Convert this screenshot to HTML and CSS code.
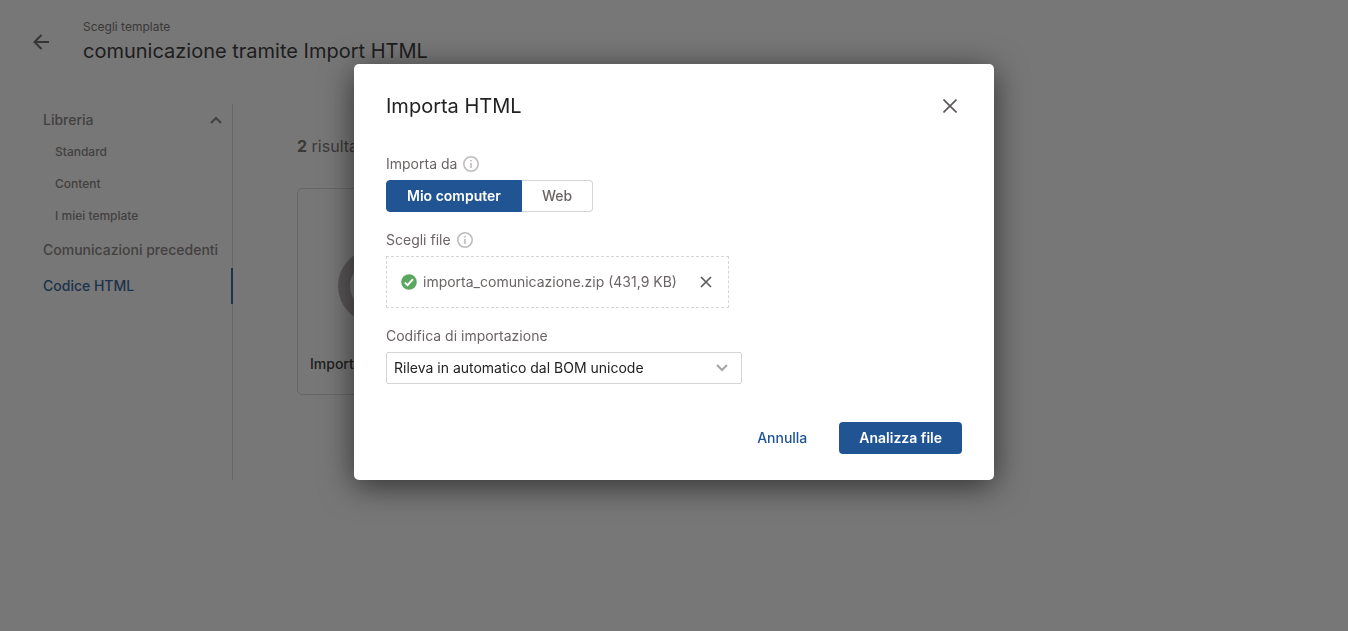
FILE: index.html
```html
<!DOCTYPE html>
<html lang="it">
<head>
    <meta charset="UTF-8">
    <meta name="viewport" content="width=device-width, initial-scale=1.0">
    <title>Importa HTML</title>
    <link rel="stylesheet" href="styles.css">
</head>
<body>
    <header class="page-header">
        <button class="icon-btn" aria-label="Indietro">
            <svg width="16" height="16" viewBox="0 0 16 16"><path d="M16 8H1.5M8.5 1L1.5 8L8.5 15"/></svg>
        </button>
        <div>
            <p class="page-step">Scegli template</p>
            <h1>comunicazione tramite Import HTML</h1>
        </div>
    </header>

    <div class="page-body">
        <nav class="sidebar">
            <a class="nav-item nav-group" href="#">Libreria
                <svg width="12" height="8" viewBox="0 0 12 8"><path d="M1 7l5-5 5 5"/></svg>
            </a>
            <a class="nav-item nav-sub" href="#">Standard</a>
            <a class="nav-item nav-sub" href="#">Content</a>
            <a class="nav-item nav-sub" href="#">I miei template</a>
            <a class="nav-item" href="#">Comunicazioni precedenti</a>
            <a class="nav-item active" href="#">Codice HTML</a>
        </nav>
        <main class="results">
            <p class="results-count"><b>2</b> risultati</p>
            <div class="card">
                <div class="card-icon"></div>
                <p>Importa HTML</p>
            </div>
        </main>
    </div>

    <div class="overlay">
        <div class="modal" role="dialog" aria-labelledby="modal-title">
            <div class="modal-header">
                <h2 id="modal-title">Importa HTML</h2>
                <button class="icon-btn" aria-label="Chiudi">
                    <svg width="14" height="14" viewBox="0 0 14 14"><path d="M0.5 0.5l13 13M13.5 0.5l-13 13"/></svg>
                </button>
            </div>

            <div class="field">
                <div class="label" id="source-label">Importa da
                    <svg class="info" width="16" height="16" viewBox="0 0 16 16"><circle cx="8" cy="8" r="7.2"/><path d="M8 7v5M8 4v1.6"/></svg>
                </div>
                <div class="switch" role="group" aria-labelledby="source-label">
                    <button class="selected">Mio computer</button>
                    <button>Web</button>
                </div>
            </div>

            <div class="field">
                <div class="label">Scegli file
                    <svg class="info" width="16" height="16" viewBox="0 0 16 16"><circle cx="8" cy="8" r="7.2"/><path d="M8 7v5M8 4v1.6"/></svg>
                </div>
                <div class="file-box">
                    <svg class="check" width="16" height="16" viewBox="0 0 16 16"><circle cx="8" cy="8" r="7.8"/><path d="M3.8 8.6l2.8 2.6 5.4-6"/></svg>
                    <span>importa_comunicazione.zip (431,9 KB)</span>
                    <button class="icon-btn" aria-label="Rimuovi file">
                        <svg width="12" height="12" viewBox="0 0 12 12"><path d="M1 1l10 10M11 1L1 11"/></svg>
                    </button>
                </div>
            </div>

            <div class="field">
                <label class="label" for="encoding">Codifica di importazione</label>
                <div class="select-wrap">
                    <select id="encoding">
                        <option>Rileva in automatico dal BOM unicode</option>
                    </select>
                    <svg width="12" height="8" viewBox="0 0 12 8"><path d="M1 1l5 5 5-5"/></svg>
                </div>
            </div>

            <div class="modal-footer">
                <button class="btn btn-link">Annulla</button>
                <button class="btn btn-primary">Analizza file</button>
            </div>
        </div>
    </div>
</body>
</html>
```
FILE: styles.css
```css
* {
    box-sizing: border-box;
}

body {
    margin: 0;
    font-family: Inter, "Liberation Sans", sans-serif;
    font-size: 14px;
    line-height: 16px;
    color: #222;
    background: #fff;
}

h1, h2, p {
    margin: 0;
    font-weight: 400;
}

h1, h2 {
    font-size: 20px;
    line-height: 32px;
}

button, select {
    font: inherit;
    cursor: pointer;
}

svg {
    display: block;
    flex: none;
    fill: none;
    stroke: #5c5757;
    stroke-width: 2;
}

.icon-btn {
    padding: 0;
    border: none;
    background: none;
}

/* page behind the dialog */
.page-header {
    display: flex;
    align-items: center;
    gap: 34px;
    padding: 19px 33px 0;
}

.page-header .icon-btn {
    padding-bottom: 2px;
}

.page-step {
    font-size: 12px;
    color: #6b6464;
}

.page-body {
    display: flex;
    margin-top: 37px;
}

.sidebar {
    flex: none;
    width: 233px;
    min-height: 376px;
    border-right: 1px solid #d5d5d5;
}

.nav-item {
    display: flex;
    justify-content: space-between;
    align-items: center;
    height: 36px;
    padding: 0 10px 0 43px;
    font-weight: 500;
    color: #7d7676;
    text-decoration: none;
}

.nav-item svg {
    stroke: #7d7676;
}

.nav-group,
.nav-sub {
    height: 32px;
}

.nav-sub {
    padding-left: 55px;
    font-size: 12px;
}

.nav-item.active {
    color: #205493;
    margin-right: -1px;
    border-right: 2px solid #205493;
}

.results {
    flex: 1;
    padding: 30px 64px;
}

.results-count {
    font-size: 16px;
    line-height: 24px;
    color: #6b6464;
}

.card {
    display: flex;
    flex-direction: column;
    align-items: center;
    width: 156px;
    margin-top: 30px;
    padding: 60px 12px 22px;
    border: 1px solid #d5d5d5;
    border-radius: 5px;
}

.card-icon {
    width: 74px;
    height: 74px;
    margin-bottom: 33px;
    border: 12px solid #b3acac;
    border-radius: 50%;
}

.card p {
    align-self: flex-start;
    font-weight: 500;
}

/* dialog */
.overlay {
    position: fixed;
    inset: 0;
    display: flex;
    justify-content: center;
    align-items: flex-start;
    padding-top: 64px;
    background: rgba(28, 28, 28, 0.6);
}

.modal {
    width: 640px;
    max-width: 95%;
    padding: 26px 32px;
    background: #fff;
    border-radius: 5px;
    box-shadow: 0 6px 32px rgba(0, 0, 0, 0.6);
}

.modal-header {
    display: flex;
    justify-content: space-between;
    align-items: center;
    padding-right: 5px;
    margin-bottom: 34px;
}

.modal-header svg,
.file-box .icon-btn svg {
    stroke-width: 1.6;
}

.field {
    margin-bottom: 20px;
}

.label {
    display: flex;
    align-items: center;
    gap: 6px;
    margin-bottom: 8px;
    color: #6b6464;
}

.info {
    stroke: #c0bcbc;
    stroke-width: 1.6;
}

.switch {
    display: flex;
}

.switch button {
    height: 32px;
    padding: 0 20px;
    border: 1px solid #d5d5d5;
    border-left: none;
    border-radius: 0 4px 4px 0;
    background: #fff;
    font-weight: 500;
    color: #6b6464;
}

.switch .selected {
    border: 1px solid #205493;
    border-radius: 4px 0 0 4px;
    background: #205493;
    font-weight: 600;
    color: #fff;
}

.file-box {
    display: flex;
    align-items: center;
    gap: 6px;
    width: 343px;
    height: 52px;
    padding: 0 16px 0 14px;
    border: 1px dashed #d5d5d5;
    color: #6b6464;
}

.file-box .icon-btn {
    margin-left: auto;
}

.check circle {
    fill: #5aa860;
    stroke: none;
}

.check path {
    stroke: #fff;
}

.select-wrap {
    position: relative;
    width: 356px;
}

.select-wrap select {
    display: block;
    appearance: none;
    width: 100%;
    height: 32px;
    padding: 0 32px 0 7px;
    border: 1px solid #d5d5d5;
    border-radius: 2px;
    background: #fff;
    color: #222;
}

.select-wrap svg {
    position: absolute;
    top: 12px;
    right: 14px;
    stroke: #aaa3a3;
    pointer-events: none;
}

.modal-footer {
    display: flex;
    justify-content: flex-end;
    gap: 12px;
    margin-top: 38px;
}

.btn {
    height: 32px;
    padding: 0 20px;
    border: none;
    border-radius: 4px;
}

.btn-link {
    background: none;
    font-weight: 500;
    color: #205493;
}

.btn-primary {
    background: #205493;
    font-weight: 600;
    color: #fff;
}
```
